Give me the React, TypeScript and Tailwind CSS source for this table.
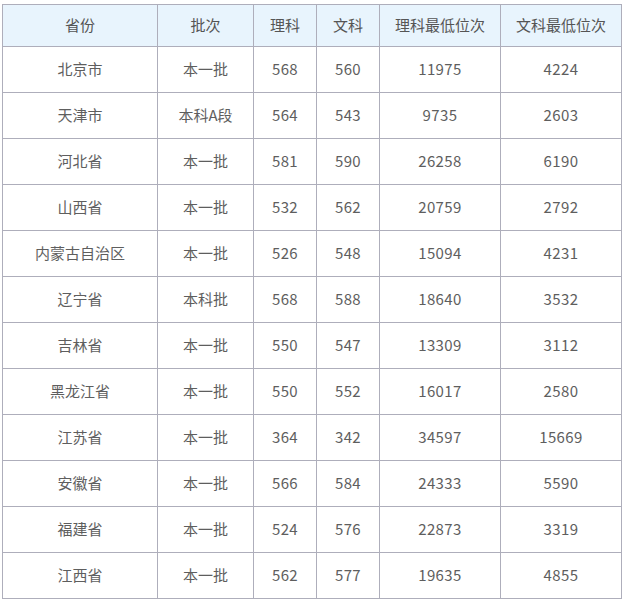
import React from 'react';

const headers = ['省份', '批次', '理科', '文科', '理科最低位次', '文科最低位次'];

const rows = [
  ['北京市', '本一批', '568', '560', '11975', '4224'],
  ['天津市', '本科A段', '564', '543', '9735', '2603'],
  ['河北省', '本一批', '581', '590', '26258', '6190'],
  ['山西省', '本一批', '532', '562', '20759', '2792'],
  ['内蒙古自治区', '本一批', '526', '548', '15094', '4231'],
  ['辽宁省', '本科批', '568', '588', '18640', '3532'],
  ['吉林省', '本一批', '550', '547', '13309', '3112'],
  ['黑龙江省', '本一批', '550', '552', '16017', '2580'],
  ['江苏省', '本一批', '364', '342', '34597', '15669'],
  ['安徽省', '本一批', '566', '584', '24333', '5590'],
  ['福建省', '本一批', '524', '576', '22873', '3319'],
  ['江西省', '本一批', '562', '577', '19635', '4855'],
];

const App = () => {
  return (
    <div className="w-[626px] h-[601px] bg-white pt-[4px] pl-[2px] overflow-hidden" style={{ fontFamily: '"Noto Sans CJK SC", "Noto Sans", sans-serif' }}>
      <div className="grid grid-cols-[155px_96px_63px_63px_121px_121px] w-[620px] border-l border-t border-[#aeaebb] text-[#555555] text-[15px]">
        {headers.map((h) => (
          <div key={h} className="h-[42px] flex items-center justify-center bg-[#e8f4fd] border-r border-b border-[#aeaebb]">
            {h}
          </div>
        ))}
        {rows.map((row) =>
          row.map((cell, i) => (
            <div
              key={row[0] + i}
              className={`h-[46px] flex items-center justify-center border-r border-b border-[#aeaebb] text-[#5e5e5e] ${i >= 2 ? 'tracking-[0.4px]' : ''}`}
            >
              {cell}
            </div>
          ))
        )}
      </div>
    </div>
  );
};

export default App;
